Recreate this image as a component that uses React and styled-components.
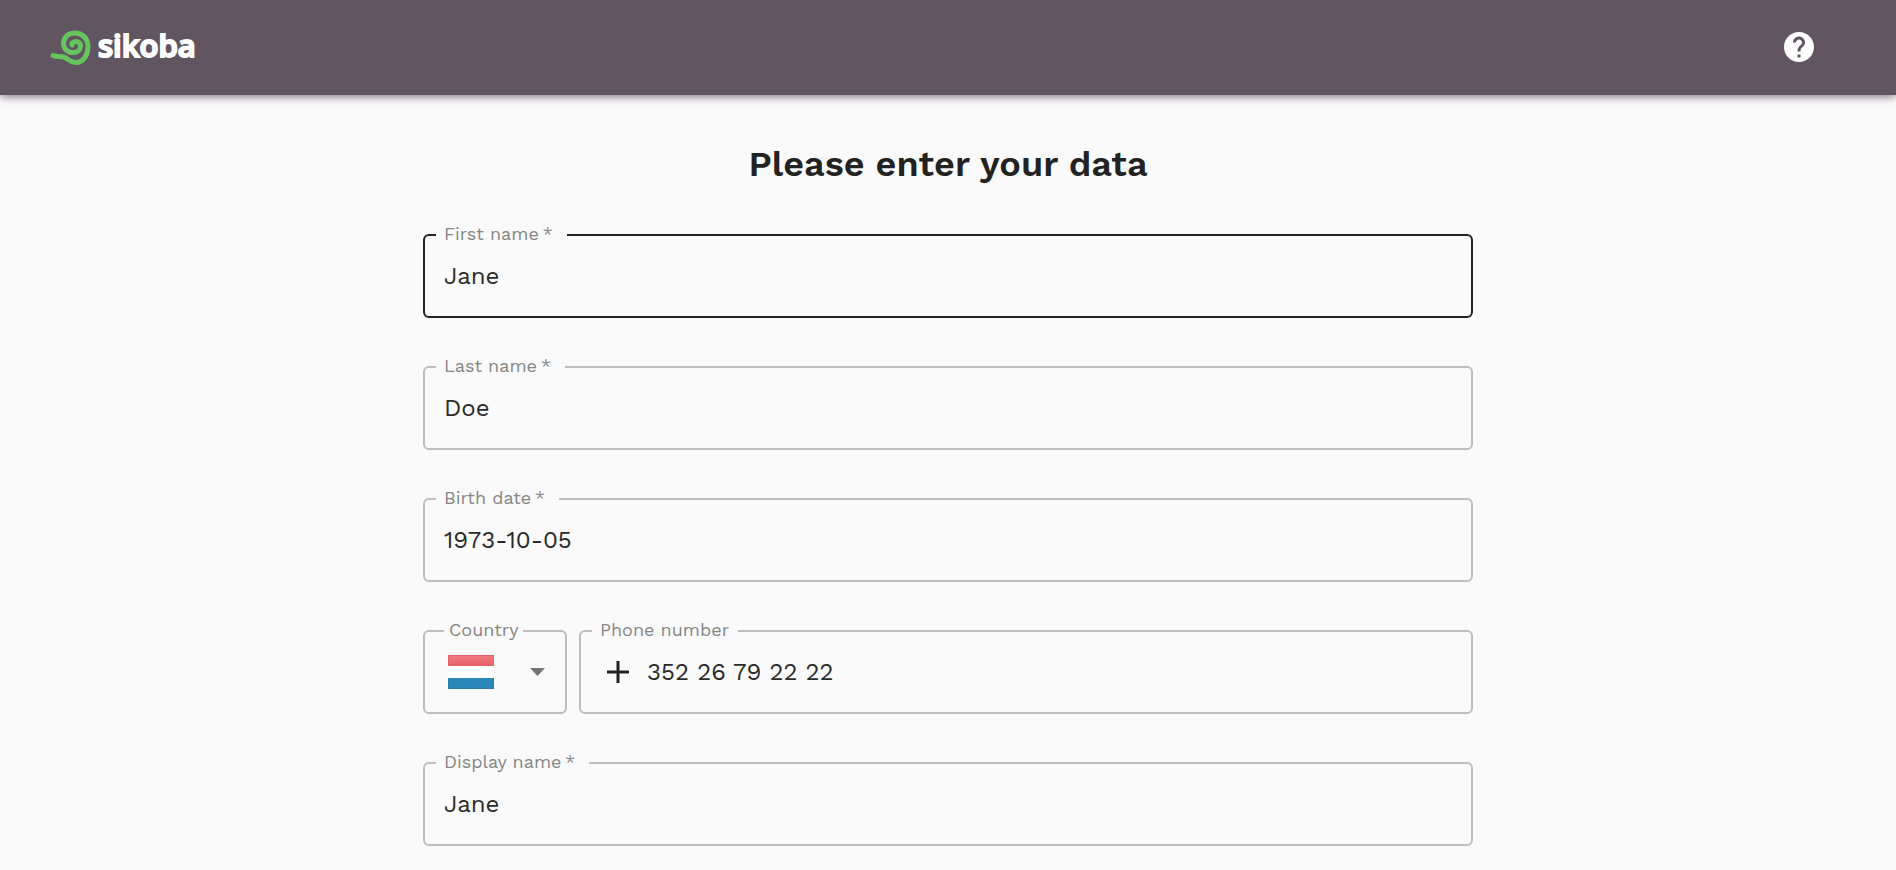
import React, { useState } from "react";
import styled, { createGlobalStyle } from "styled-components";

const GlobalStyle = createGlobalStyle`
  *, *::before, *::after { box-sizing: border-box; }
  body {
    margin: 0;
    background: #fafafa;
    color: #222222;
    font-family: "Work Sans", Inter, sans-serif;
  }
`;

const Header = styled.header`
  display: flex;
  align-items: center;
  justify-content: space-between;
  height: 95px;
  padding: 0 79px 2px 49px;
  background: #625562;
  box-shadow: 0 2px 8px rgba(60, 35, 60, 0.6);
`;

const Brand = styled.a`
  display: flex;
  align-items: center;
  gap: 6px;
  color: #ffffff;
  text-decoration: none;
`;

const Wordmark = styled.span`
  font-family: "Open Sans", "Noto Sans", sans-serif;
  font-size: 31px;
  font-weight: 600;
  line-height: 36px;
  padding-bottom: 4px;
  -webkit-text-stroke: 2px #ffffff;
`;

const HelpButton = styled.button`
  display: flex;
  padding: 0;
  border: 0;
  background: none;
  color: #ffffff;
  cursor: pointer;
`;

const Main = styled.main`
  width: 100%;
  max-width: 1098px;
  margin: 0 auto;
  padding: 49px 24px 24px;
`;

const Title = styled.h1`
  margin: 0 0 41px;
  font-size: 36px;
  font-weight: 600;
  line-height: 40px;
  text-align: center;
`;

const Form = styled.form`
  display: flex;
  flex-direction: column;
  gap: 39px;
`;

const PhoneRow = styled.div`
  display: flex;
  gap: 12px;
`;

const Outline = styled.fieldset`
  flex: ${({ $width }) => ($width ? `0 0 ${$width}px` : "1 1 auto")};
  min-width: 0;
  margin: 0;
  padding: 0 ${({ $inset }) => $inset || 19}px;
  border: 2px solid #bdbdbd;
  border-radius: 6px;

  &:focus-within,
  &[data-active="true"] { border-color: #222222; }
`;

const Legend = styled.legend`
  margin-left: ${({ $inset, $start }) => ($start || 11) - ($inset || 19)}px;
  padding: 0 ${({ $required, $pad }) => ($required ? 14 : $pad || 9)}px 2px ${({ $pad }) => $pad || 8}px;
  color: #858585;
  font-size: 18px;
  font-weight: 400;
  line-height: 18px;
  white-space: nowrap;
`;

const Control = styled.div`
  display: flex;
  align-items: center;
  gap: 18px;
  height: 71px;
  padding-bottom: 10px;
`;

const Input = styled.input`
  flex: 1;
  min-width: 0;
  height: 48px;
  padding: 0;
  border: 0;
  outline: 0;
  background: none;
  color: #2a2a2a;
  font: inherit;
  font-size: 24px;
`;

const CountryControl = styled.div`
  display: grid;
  align-items: center;
  height: 71px;
  padding-bottom: 10px;
`;

const CountrySelect = styled.select`
  grid-area: 1 / 1;
  width: 100%;
  height: 48px;
  border: 0;
  outline: 0;
  appearance: none;
  background: none;
  color: transparent;
  font: inherit;
  cursor: pointer;

  option { color: #222222; }
`;

const CountryFace = styled.div`
  grid-area: 1 / 1;
  display: flex;
  align-items: center;
  justify-content: space-between;
  padding-left: 3px;
  pointer-events: none;
`;

const SnailIcon = () => (
  <svg width="43" height="38" viewBox="0 0 43 38" fill="none" stroke="#66c45c" strokeLinecap="round" strokeLinejoin="round" aria-hidden="true">
    <path d="M4 27.500C8 29.500 12 27.500 16 29.500C20 31.500 21 34.500 27 34.500C34 34.500 39 27 39 19C39 10 33 5 26 5C19 5 14.500 9.500 14.500 15.500C14.500 21 19 24.500 24 24.500C28.500 24.500 31.500 21.500 31.500 18C31.500 14.500 28 12.500 25 14C23 15 22.500 16 23 17" strokeWidth="5" />
  </svg>
);

const HelpIcon = () => (
  <svg width="36" height="36" viewBox="0 0 24 24" fill="currentColor" aria-hidden="true">
    <path d="M12 2C6.48 2 2 6.48 2 12s4.48 10 10 10 10-4.48 10-10S17.52 2 12 2zm1 17h-2v-2h2v2zm2.070-7.750-.9.920C13.450 12.900 13 13.500 13 15h-2v-.5c0-1.100.45-2.100 1.170-2.830l1.240-1.260c.37-.36.59-.86.59-1.410 0-1.100-.9-2-2-2s-2 .9-2 2H8c0-2.210 1.790-4 4-4s4 1.790 4 4c0 .88-.36 1.680-.93 2.250z" />
  </svg>
);

const FlagIcon = () => (
  <svg width="46" height="34" viewBox="0 0 46 34" aria-hidden="true">
    <defs>
      <linearGradient id="flag-red" x1="0" y1="0" x2="0" y2="1">
        <stop offset="0" stopColor="#f17d80" />
        <stop offset="1" stopColor="#e75f66" />
      </linearGradient>
    </defs>
    <rect width="46" height="34" fill="#ffffff" />
    <rect width="46" height="11" fill="url(#flag-red)" />
    <path d="M.5 11V.5H45.500V11" fill="none" stroke="#d96369" />
    <rect y="23" width="46" height="11" fill="#2b86b9" />
    <path d="M.5 23V33.500H45.500V23" fill="none" stroke="#2a7cac" />
  </svg>
);

const ArrowIcon = () => (
  <svg width="15" height="8" viewBox="0 0 15 8" fill="#757575" aria-hidden="true">
    <path d="M0 0h15L7.500 8z" />
  </svg>
);

const PlusIcon = () => (
  <svg width="22" height="22" viewBox="0 0 22 22" stroke="#222222" strokeWidth="3" aria-hidden="true">
    <path d="M11 0V22M0 11H22" />
  </svg>
);

function TextField({ id, label, value, active, required, type = "text", icon, inset }) {
  const [text, setText] = useState(value);
  return (
    <Outline data-active={active} $inset={inset}>
      <Legend $inset={inset} $required={required}>
        <label htmlFor={id}>{required ? `${label}\u2009*` : label}</label>
      </Legend>
      <Control>
        {icon}
        <Input id={id} type={type} value={text} required={required} onChange={(e) => setText(e.target.value)} />
      </Control>
    </Outline>
  );
}

function CountryField() {
  return (
    <Outline $width={144} $inset={20}>
      <Legend $inset={20} $start={19} $pad={5}>
        <label htmlFor="country">Country</label>
      </Legend>
      <CountryControl>
        <CountryFace>
          <FlagIcon />
          <ArrowIcon />
        </CountryFace>
        <CountrySelect id="country" defaultValue="LU">
          <option value="LU" aria-label="Luxembourg" />
        </CountrySelect>
      </CountryControl>
    </Outline>
  );
}

export default function App() {
  return (
    <>
      <GlobalStyle />
      <Header>
        <Brand href="#">
          <SnailIcon />
          <Wordmark>sikoba</Wordmark>
        </Brand>
        <HelpButton type="button" aria-label="Help">
          <HelpIcon />
        </HelpButton>
      </Header>
      <Main>
        <Title>Please enter your data</Title>
        <Form>
          <TextField id="first-name" label="First name" value="Jane" required active />
          <TextField id="last-name" label="Last name" value="Doe" required />
          <TextField id="birth-date" label="Birth date" value="1973-10-05" required />
          <PhoneRow>
            <CountryField />
            <TextField id="phone" label="Phone number" value="352 26 79 22 22" type="tel" icon={<PlusIcon />} inset={26} />
          </PhoneRow>
          <TextField id="display-name" label="Display name" value="Jane" required />
        </Form>
      </Main>
    </>
  );
}
